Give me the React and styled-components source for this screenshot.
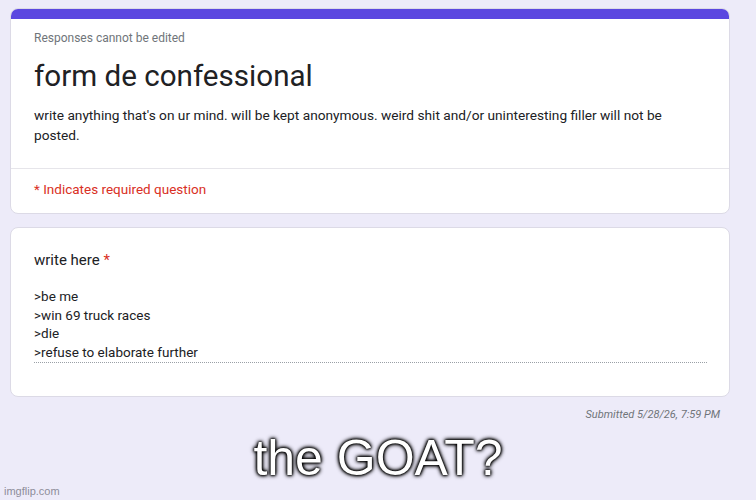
import styled, { createGlobalStyle } from "styled-components";

const GlobalStyle = createGlobalStyle`
  html, body {
    margin: 0;
    padding: 0;
    background: #edebf9;
  }
  body {
    font-family: "Roboto", "Liberation Sans", Arial, sans-serif;
    color: #202124;
  }
`;

const answer = [">be me", ">win 69 truck races", ">die", ">refuse to elaborate further"];

const App = () => {
  return (
    <>
      <GlobalStyle />
      <Page>
        <Card>
          <TopBar />
          <Header>
            <Notice>Responses cannot be edited</Notice>
            <Title>form de confessional</Title>
            <Description>
              write anything that's on ur mind. will be kept anonymous. weird shit and/or uninteresting
              filler will not be posted.
            </Description>
          </Header>
          <Required>* Indicates required question</Required>
        </Card>

        <Card>
          <Question>
            <Label>
              write here <Star>*</Star>
            </Label>
            <Answer>
              {answer.map((line) => (
                <div key={line}>{line}</div>
              ))}
            </Answer>
          </Question>
        </Card>

        <Submitted>Submitted 5/28/26, 7:59 PM</Submitted>
      </Page>
      <Caption>the GOAT?</Caption>
      <Watermark>imgflip.com</Watermark>
    </>
  );
};

export default App;

const Page = styled.div`
  width: 720px;
  padding: 8px 26px 0 10px;
  display: flex;
  flex-direction: column;
  gap: 13px;
`;

const Card = styled.section`
  background: #fff;
  border: 1px solid #dcdae6;
  border-radius: 8px;
  overflow: hidden;
`;

const TopBar = styled.div`
  height: 10px;
  background: #5b47e0;
`;

const Header = styled.div`
  padding: 10px 23px 23px;
  border-bottom: 1px solid #e6e5ea;
`;

const Notice = styled.div`
  font-size: 12px;
  line-height: 18px;
  color: #70757a;
`;

const Title = styled.h1`
  margin: 12px 0 0;
  font-size: 29.6px;
  line-height: 34px;
  font-weight: 400;
  color: #202124;
`;

const Description = styled.p`
  margin: 12px 0 0;
  font-size: 13.7px;
  line-height: 20px;
  color: #202124;
`;

const Required = styled.div`
  padding: 10px 23px 14px;
  font-size: 13.5px;
  line-height: 20px;
  color: #d93025;
`;

const Question = styled.div`
  padding: 20px 22px 33px 23px;
`;

const Label = styled.div`
  font-size: 15px;
  line-height: 24px;
  color: #202124;
`;

const Star = styled.span`
  color: #d93025;
`;

const Answer = styled.div`
  margin-top: 15px;
  font-size: 13.5px;
  line-height: 18.5px;
  color: #202124;
  padding-bottom: 1px;
  border-bottom: 1px dotted #9aa0a6;
`;

const Submitted = styled.div`
  margin-top: -2px;
  text-align: right;
  padding-right: 10px;
  font-size: 11px;
  font-style: italic;
  color: #70757a;
`;

const Caption = styled.div`
  margin-top: 9px;
  text-align: center;
  font-family: "Liberation Sans", Arial, sans-serif;
  font-size: 50px;
  line-height: 56px;
  color: #fff;
  text-shadow: 0 0 2px #000, 0 0 3px #000, 0 0 4px #000, 0 0 5px #000;
`;

const Watermark = styled.div`
  position: absolute;
  left: 4px;
  bottom: 3px;
  font-family: "Liberation Sans", Arial, sans-serif;
  font-size: 11px;
  color: #8e8d99;
`;
